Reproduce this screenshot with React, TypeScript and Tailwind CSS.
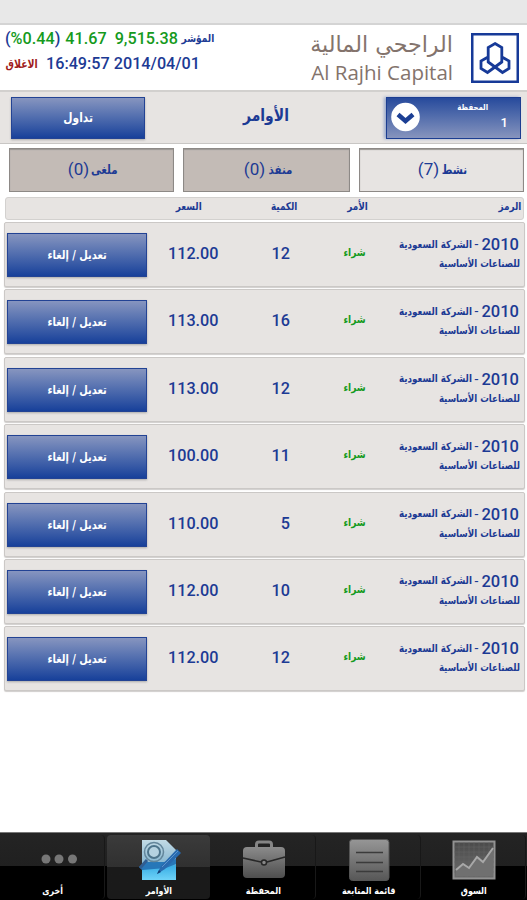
import type { ReactNode } from "react";

const orders = [
  { price: "112.00", quantity: 12 },
  { price: "113.00", quantity: 16 },
  { price: "113.00", quantity: 12 },
  { price: "100.00", quantity: 11 },
  { price: "110.00", quantity: 5 },
  { price: "112.00", quantity: 10 },
  { price: "112.00", quantity: 12 },
];

export default function App() {
  return (
    <div className="flex h-[900px] w-[527px] flex-col overflow-hidden bg-white font-[Roboto,'DejaVu_Sans',sans-serif] text-[#1c3a94]">
      <div className="h-[25px] shrink-0 border-b-2 border-[#d4d4d4] bg-[#e8e8e8]" />
      <Header />
      <TitleBar />
      <Tabs />
      <TableHead />
      <div className="mt-[2px] flex flex-col gap-[2.4px] pr-[2px] pl-[4px]">
        {orders.map((order, i) => (
          <OrderRow key={i} price={order.price} quantity={order.quantity} />
        ))}
      </div>
      <BottomNav />
    </div>
  );
}

function Header() {
  return (
    <header className="flex h-[65px] shrink-0 justify-between pr-[8px] pl-[5px]">
      <div className="flex flex-col pt-px text-[16.2px] leading-[20px] font-medium whitespace-nowrap">
        <div className="flex h-[25px] items-center">
          <span>(</span>
          <span className="text-[#159a1d]">%0.44</span>
          <span>)</span>
          <span className="ml-[5px] text-[#159a1d]">41.67</span>
          <span className="ml-[8px] text-[#159a1d]">9,515.38</span>
          <Arabic className="ml-[3px] w-[33px] text-[11px]">المؤشر</Arabic>
        </div>
        <div className="flex h-[25px] items-center">
          <Arabic className="w-[33px] text-[11.5px] text-[#a01c20]">الاغلاق</Arabic>
          <span className="ml-[8px]">16:49:57 2014/04/01</span>
        </div>
      </div>
      <div className="flex gap-[18px] pt-[8px]">
        <div className="flex w-[143px] flex-col items-end text-[#83736c]">
          <div dir="rtl" className="h-[27px] text-[22.2px] leading-[23px] whitespace-nowrap font-['DejaVu_Sans',sans-serif]">
            الراجحي المالية
          </div>
          <div className="text-[20.5px] leading-[25px] whitespace-nowrap font-['Open_Sans',sans-serif]">
            Al Rajhi Capital
          </div>
        </div>
        <Logo />
      </div>
    </header>
  );
}

function Logo() {
  return (
    <svg width="48" height="50" viewBox="0 0 48 50" fill="none" stroke="#173a98">
      <rect x="1.25" y="1.25" width="45.5" height="47.5" strokeWidth="2.5" />
      <path
        d="M24 10.500 30.800 14.500V29L24 34 17.200 29V14.500ZM17 24 10 28V35.500L16.500 39.500 30.800 29M31 24 38 28V35.500L31.500 39.500 17.200 29"
        strokeWidth="2.8"
      />
    </svg>
  );
}

function TitleBar() {
  return (
    <div className="flex h-[54px] shrink-0 items-start justify-between border-t-2 border-b border-t-[#d2d0ce] border-b-[#c8c6c4] bg-[#e7e4e2] pt-[5px] pr-[6px] pl-[11px]">
      <BlueButton className="h-[42px] w-[134px] text-[13px]">تداول</BlueButton>
      <Arabic className="mt-[9px] w-[48px] text-[17px]">الأوامر</Arabic>
      <div className="relative flex h-[42px] w-[135px] justify-between border border-[#1c3d91] bg-linear-to-b from-[#274a9c] to-[#8794bd] pr-[12px] pl-[4px] text-white shadow-[-2px_0_3px_#9aa9cc]">
        <svg className="mt-[4px]" width="29" height="30" viewBox="0 0 29 30" fill="none">
          <circle cx="14.500" cy="15" r="14.300" fill="#fff" />
          <path d="M7 12.500 14.500 19 22 12.500" stroke="#1c3f94" strokeWidth="4.500" />
        </svg>
        <Arabic className="absolute top-0 right-[33px] w-[29px] text-[8.5px]">المحفظة</Arabic>
        <span className="mt-[17px] text-[13px] leading-[16px] font-medium">1</span>
      </div>
    </div>
  );
}

function Tabs() {
  const tabs = [
    { title: "ملغى", count: 0, style: "bg-[#c3bbb6] pl-[2px]" },
    { title: "منفذ", count: 0, style: "bg-[#c3bbb6] pl-[4px]" },
    { title: "نشط", count: 7, style: "bg-[#e7e4e2] pl-[2px]" },
  ];
  return (
    <nav className="mt-[4px] flex h-[44px] shrink-0 gap-[9px] pr-[3px] pl-[9px]">
      {tabs.map((tab) => (
        <div
          key={tab.title}
          className={`flex w-0 flex-1 items-center justify-center gap-[2px] border border-[#8d8986] text-[17px] shadow-[inset_0_1px_1px_#9b9794] ${tab.style}`}
        >
          <span>({tab.count})</span>
          <Arabic className="w-[26px] text-[12.5px]">{tab.title}</Arabic>
        </div>
      ))}
    </nav>
  );
}

function TableHead() {
  return (
    <div className="mt-[5px] mr-[3px] ml-[5px] flex h-[23px] shrink-0 items-start rounded-[3px] border border-[#d3d1cf] bg-[#e7e4e2] text-[10.8px]">
      <Arabic className="ml-[169px] w-[27px]">السعر</Arabic>
      <Arabic className="ml-[69px] w-[26px]">الكمية</Arabic>
      <Arabic className="ml-[50px] w-[22px]">الأمر</Arabic>
      <Arabic className="mr-px ml-auto w-[24px]">الرمز</Arabic>
    </div>
  );
}

function OrderRow({ price, quantity }: { price: string; quantity: number }) {
  return (
    <div className="flex h-[65px] shrink-0 rounded-[2px] border border-[#cbc8c6] bg-[#e7e4e2] shadow-[0_1px_1px_#d0cecc]">
      <BlueButton className="mt-[10px] ml-[2px] h-[44px] w-[140px] text-[12px]">
        تعديل / إلغاء
      </BlueButton>
      <span className="mt-[20px] ml-[21px] w-[52px] text-[16.2px] leading-[22px] font-medium">
        {price}
      </span>
      <span className="mt-[20px] ml-[20px] w-[50px] text-right text-[16.2px] leading-[22px] font-medium">
        {quantity}
      </span>
      <Arabic className="mt-[21px] ml-[53px] w-[24px] text-[11px] text-[#159a1d]">شراء</Arabic>
      <div className="mt-[12px] mr-[5px] ml-auto flex flex-col items-end">
        <div className="flex h-[19px] items-center">
          <Arabic className="w-[73px] text-[10.7px]">الشركة السعودية</Arabic>
          <span className="mx-[3px] text-[14px]">-</span>
          <span className="text-[16.5px] leading-[19px] font-medium">2010</span>
        </div>
        <Arabic className="w-[80px] text-[10.5px]">للصناعات الأساسية</Arabic>
      </div>
    </div>
  );
}

function BottomNav() {
  const items = [
    { title: "أخرى", icon: <MoreIcon />, width: "w-[22px]" },
    { title: "الأوامر", icon: <OrdersIcon />, width: "w-[28px]", active: true },
    { title: "المحفظة", icon: <BriefcaseIcon />, width: "w-[34px]" },
    { title: "قائمة المتابعة", icon: <ListIcon />, width: "w-[54px]" },
    { title: "السوق", icon: <MarketIcon />, width: "w-[27px]" },
  ];
  return (
    <nav className="mt-auto grid h-[68px] shrink-0 grid-cols-5 border-t border-[#777] bg-linear-to-b from-[#242424] from-0% via-[#202020] via-50% to-black to-50% pt-[2px] pl-px text-white">
      {items.map((item) => (
        <div
          key={item.title}
          className={`mx-[1px] flex h-[64px] flex-col items-center rounded-[4px] pt-[4px] ${
            item.active
              ? "bg-linear-to-b from-[#3b3b3b] from-0% via-[#303030] via-50% to-[#1a1a1a] to-50%"
              : "border-r border-[#181818]"
          }`}
        >
          {item.icon}
          <Arabic className={`mt-px text-[9.7px] ${item.width}`}>{item.title}</Arabic>
        </div>
      ))}
    </nav>
  );
}

function BlueButton({ className, children }: { className: string; children: ReactNode }) {
  return (
    <button
      className={`flex shrink-0 items-center justify-center border border-[#234394] bg-linear-to-b from-[#8795bf] to-[#17409a] text-white shadow-[0_1px_2px_#aaa] ${className}`}
    >
      <Arabic>{children}</Arabic>
    </button>
  );
}

// DejaVu Arabic runs wide, so the glyphs are condensed inside the box
function Arabic({ className = "", children }: { className?: string; children: ReactNode }) {
  return (
    <span
      dir="rtl"
      className={`flex shrink-0 justify-center leading-[18px] font-bold whitespace-nowrap font-['DejaVu_Sans',sans-serif] ${className}`}
    >
      <span className="shrink-0 scale-x-[0.82]">{children}</span>
    </span>
  );
}

function MoreIcon() {
  return (
    <svg className="shrink-0" width="54" height="42" viewBox="0 0 54 42" fill="#777">
      <circle cx="20" cy="20" r="4.500" />
      <circle cx="33" cy="20" r="4.500" />
      <circle cx="46.500" cy="20" r="4.500" />
    </svg>
  );
}

function OrdersIcon() {
  return (
    <svg className="shrink-0" width="46" height="42" viewBox="0 0 46 42" fill="none">
      <defs>
        <linearGradient id="page" x2="0" y2="1">
          <stop stopColor="#c2dae5" />
          <stop offset=".55" stopColor="#8cb9d2" />
          <stop offset=".65" stopColor="#3aaee5" />
          <stop offset="1" stopColor="#6fd3f8" />
        </linearGradient>
      </defs>
      <path d="M6 1H30L40 11V41H6Z" fill="url(#page)" />
      <path d="M3 28 10 23H28L40 20V25L30 29 6 31Z" fill="#2777b8" />
      <circle cx="18" cy="13" r="9.500" stroke="#63869b" strokeWidth="1.500" />
      <circle cx="18" cy="13" r="6" fill="#b5d2e0" stroke="#4d748b" strokeWidth="2" />
      <path d="M11 21 4 29" stroke="#315e92" strokeWidth="3" />
      <path d="M21 35 25 27 41 10 45 14 29 30Z" fill="#286aaf" />
      <path d="M26 28 42 12" stroke="#5b93cc" />
      <path d="M21 35 23 31 25 33Z" fill="#123f73" />
    </svg>
  );
}

function BriefcaseIcon() {
  return (
    <svg className="shrink-0" width="46" height="42" viewBox="0 0 46 42" fill="none">
      <defs>
        <linearGradient id="case" x2="0" y2="1">
          <stop stopColor="#8b8b8b" />
          <stop offset="1" stopColor="#4e4e4e" />
        </linearGradient>
      </defs>
      <path d="M16.500 8V5.500Q16.500 3 19 3H29Q31.500 3 31.500 5.500V8" stroke="#858585" strokeWidth="3" />
      <rect x="3" y="8" width="42" height="31" rx="4" fill="url(#case)" />
      <path d="M3 19 21 23M27 23 45 18" stroke="#272727" strokeWidth="1.500" />
      <circle cx="24" cy="23.500" r="2.500" fill="#888" stroke="#272727" strokeWidth="1.500" />
    </svg>
  );
}

function ListIcon() {
  return (
    <svg className="shrink-0" width="42" height="42" viewBox="0 0 42 42">
      <defs>
        <linearGradient id="sheet" x2="0" y2="1">
          <stop stopColor="#969696" />
          <stop offset="1" stopColor="#575757" />
        </linearGradient>
      </defs>
      <rect x="1.500" y=".5" width="39.500" height="41" rx="3" fill="url(#sheet)" stroke="#555" />
      <path d="M8 13.500H35M8 23.500H35M8 32.500H35" stroke="#3b3b3b" strokeWidth="1.500" />
    </svg>
  );
}

function MarketIcon() {
  return (
    <svg className="shrink-0" width="44" height="42" viewBox="0 0 44 42" fill="none">
      <defs>
        <linearGradient id="chart" x2="0" y2="1">
          <stop stopColor="#4a4a4a" />
          <stop offset="1" stopColor="#6d6d6d" />
        </linearGradient>
      </defs>
      <rect x="1.500" y="2.500" width="41" height="37" fill="url(#chart)" stroke="#929292" strokeWidth="2" />
      <path d="M7 3V38M12 3V38M17 3V38M22 3V38M27 3V38M32 3V38M37 3V38M2 8H42M2 13H42M2 18H42M2 23H42M2 28H42M2 33H42" stroke="#666" strokeWidth=".5" />
      <path d="M4 31 11 25 17 29 25 18 31 23 41 9V37H4Z" fill="#707070" />
      <path d="M4 31 11 25 17 29 25 18 31 23 41 9" stroke="#a8a8a8" strokeWidth="2" />
    </svg>
  );
}
